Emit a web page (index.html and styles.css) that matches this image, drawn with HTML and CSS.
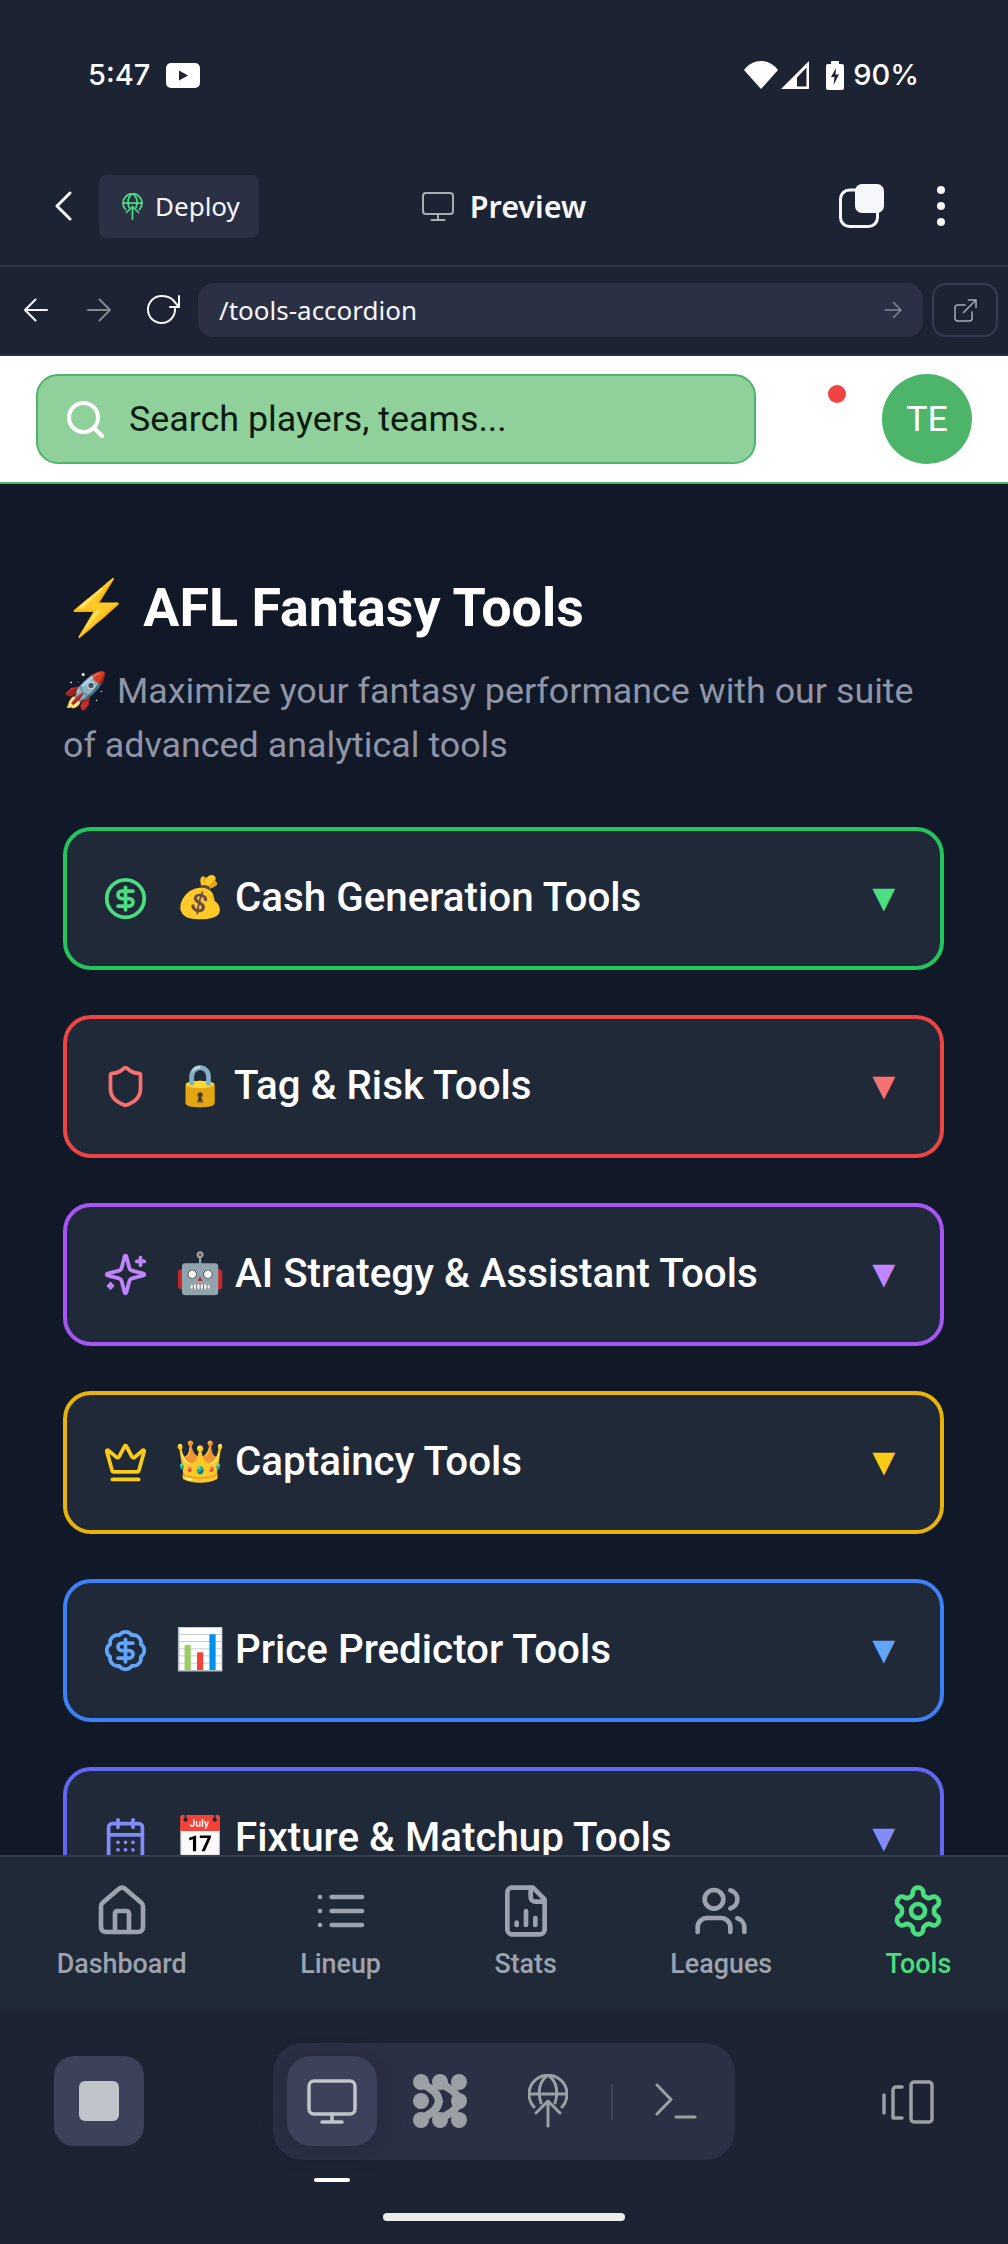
FILE: index.html
```html
<!DOCTYPE html>
<html lang="en">
<head>
<meta charset="utf-8">
<title>AFL Fantasy Tools</title>
<link rel="stylesheet" href="styles.css">
</head>
<body>
<div class="status">
  <div class="status-left">
    <span class="time">5:47</span>
    <svg class="yt" viewBox="0 0 34 25"><rect width="34" height="25" rx="5" fill="#fff"/><path d="M13 7.500l9 5-9 5z" fill="#1c2333"/></svg>
  </div>
  <div class="status-right">
    <svg class="wifi" viewBox="0 0 34 28"><path d="M0 9C9-3 25-3 34 9L17 28z" fill="#fff"/></svg>
    <svg class="signal" viewBox="0 0 28 28"><path d="M28 0V28H0zM25.500 6.500L16 16.500V25.500H25.500z" fill="#fff" fill-rule="evenodd"/></svg>
    <svg class="batt" viewBox="0 0 18 29"><path d="M5 0h8v3h3a2 2 0 0 1 2 2v22a2 2 0 0 1-2 2H2a2 2 0 0 1-2-2V5a2 2 0 0 1 2-2h3z" fill="#fff"/><path d="M10 7L5 16h3.500L7.500 24 13 13.500H9.500z" fill="#1c2333"/></svg>
    <span class="pct">90%</span>
  </div>
</div>

<header class="topbar">
  <div class="top-left">
    <svg class="chev" viewBox="0 0 18 30"><path d="M16 2L3 15l13 13" fill="none" stroke="#f5f7fa" stroke-width="3" stroke-linecap="round" stroke-linejoin="round"/></svg>
    <div class="deploy">
      <svg class="globe-s" viewBox="0 0 40 54" fill="none" stroke="#4ade80" stroke-width="3.500" stroke-linecap="round" stroke-linejoin="round"><path d="M6 33A19 19 0 1 1 34 33"/><path d="M1.500 20H38.500"/><path d="M20 1C10 8 10 20 13 29"/><path d="M20 1C30 8 30 20 27 29"/><path d="M20 52V27M8 39l12-12 12 12"/></svg>
      <span>Deploy</span>
    </div>
  </div>
  <div class="top-mid">
    <svg class="mon-s" viewBox="0 0 32 29" fill="none" stroke="#a8adb5" stroke-width="2" stroke-linecap="round" stroke-linejoin="round"><rect x="1" y="1" width="30" height="21" rx="3"/><path d="M16 22v6M9.500 28h13"/></svg>
    <span>Preview</span>
  </div>
  <div class="top-right">
    <svg class="tabs" viewBox="0 0 45 44"><rect x="1.500" y="6" width="37" height="36.500" rx="9" fill="none" stroke="#f5f7fa" stroke-width="3"/><rect x="16" y="0" width="29" height="29" rx="7" fill="#f5f7fa"/></svg>
    <svg class="dots" viewBox="0 0 8 40"><circle cx="4" cy="4" r="4" fill="#f5f7fa"/><circle cx="4" cy="20" r="4" fill="#f5f7fa"/><circle cx="4" cy="36" r="4" fill="#f5f7fa"/></svg>
  </div>
</header>

<div class="urlrow">
  <svg class="nav-arrow" viewBox="0 0 24 24" fill="none" stroke="#f5f7fa" stroke-width="2" stroke-linecap="round" stroke-linejoin="round"><path d="M23 12H1M11.500 1.500L1 12l10.500 10.500"/></svg>
  <svg class="nav-arrow dim" viewBox="0 0 24 24" fill="none" stroke="#85888f" stroke-width="2" stroke-linecap="round" stroke-linejoin="round"><path d="M1 12h22M12.500 1.500L23 12 12.500 22.500"/></svg>
  <svg class="reload" viewBox="0 0 33 30" fill="none" stroke="#f5f7fa" stroke-width="2" stroke-linecap="round" stroke-linejoin="round"><path d="M28 14a13.500 13.500 0 1 1-13.500-13c4 0 8.500 1 11.500 4L32 12"/><path d="M32 1v11H23"/></svg>
  <div class="url">
    <span>/tools-accordion</span>
    <svg class="url-go" viewBox="0 0 18 18" fill="none" stroke="#82868f" stroke-width="1.500" stroke-linecap="round" stroke-linejoin="round"><path d="M1 9h16M9.500 1.500L17 9l-7.500 7.500"/></svg>
  </div>
  <div class="ext">
    <svg class="ext-i" viewBox="0 0 23 23" fill="none" stroke="#a8adb5" stroke-width="1.500" stroke-linecap="round" stroke-linejoin="round"><path d="M18 13v6.500a2.500 2.500 0 0 1-2.500 2.500h-12A2.500 2.500 0 0 1 1 19.500v-11A2.500 2.500 0 0 1 3.500 6H11"/><path d="M14.500 1H22v7.500M22 1L9.500 13.500"/></svg>
  </div>
</div>

<div class="apphead">
  <div class="search">
    <svg class="search-i" viewBox="0 0 37 37" fill="none" stroke="#fff" stroke-width="4" stroke-linecap="round"><circle cx="16.500" cy="16.500" r="14.500"/><path d="M27.500 27.500l7.500 7.500"/></svg>
    <span>Search players, teams...</span>
  </div>
  <span class="reddot"></span>
  <div class="avatar">TE</div>
</div>

<main class="page">
  <h1 class="title"><span class="emo">⚡</span> AFL Fantasy Tools</h1>
  <p class="sub">🚀 Maximize your fantasy performance with our suite of advanced analytical tools</p>
  <div class="list">
    <section class="card green">
      <svg class="ic" viewBox="0 0 24 24"><circle cx="12" cy="12" r="10"/><path d="M16 8h-6a2 2 0 1 0 0 4h4a2 2 0 1 1 0 4H8"/><path d="M12 18V6"/></svg>
      <h2>💰 Cash Generation Tools</h2><span class="arrow">▼</span>
    </section>
    <section class="card red">
      <svg class="ic" viewBox="0 0 24 24"><path d="M20 13c0 5-3.500 7.500-7.660 8.950a1 1 0 0 1-.67-.01C7.500 20.500 4 18 4 13V6a1 1 0 0 1 1-1c2 0 4.500-1.200 6.240-2.720a1.170 1.170 0 0 1 1.520 0C14.510 3.810 17 5 19 5a1 1 0 0 1 1 1z"/></svg>
      <h2>🔒 Tag &amp; Risk Tools</h2><span class="arrow">▼</span>
    </section>
    <section class="card purple">
      <svg class="ic" viewBox="0 0 24 24"><path d="M9.937 15.500A2 2 0 0 0 8.500 14.063l-6.135-1.582a.5.5 0 0 1 0-.962L8.500 9.936A2 2 0 0 0 9.937 8.500l1.582-6.135a.5.5 0 0 1 .963 0L14.063 8.500A2 2 0 0 0 15.500 9.937l6.135 1.581a.5.5 0 0 1 0 .964L15.500 14.063a2 2 0 0 0-1.437 1.437l-1.582 6.135a.5.5 0 0 1-.963 0z"/><path d="M20 3v4M22 5h-4M4 17v2M5 18H3"/></svg>
      <h2>🤖 AI Strategy &amp; Assistant Tools</h2><span class="arrow">▼</span>
    </section>
    <section class="card yellow">
      <svg class="ic" viewBox="0 0 24 24"><path d="M11.562 3.266a.5.5 0 0 1 .876 0L15.390 8.870a1 1 0 0 0 1.516.294L21.183 5.500a.5.5 0 0 1 .798.519l-2.834 10.246a1 1 0 0 1-.956.734H5.810a1 1 0 0 1-.957-.734L2.020 6.020a.5.5 0 0 1 .798-.519l4.276 3.664a1 1 0 0 0 1.516-.294z"/><path d="M5 21h14"/></svg>
      <h2>👑 Captaincy Tools</h2><span class="arrow">▼</span>
    </section>
    <section class="card blue">
      <svg class="ic" viewBox="0 0 24 24"><path d="M3.850 8.620a4 4 0 0 1 4.780-4.770 4 4 0 0 1 6.740 0 4 4 0 0 1 4.780 4.780 4 4 0 0 1 0 6.740 4 4 0 0 1-4.770 4.780 4 4 0 0 1-6.750 0 4 4 0 0 1-4.780-4.770 4 4 0 0 1 0-6.760Z"/><path d="M16 8h-6a2 2 0 1 0 0 4h4a2 2 0 1 1 0 4H8"/><path d="M12 18V6"/></svg>
      <h2>📊 Price Predictor Tools</h2><span class="arrow">▼</span>
    </section>
    <section class="card indigo">
      <svg class="ic" viewBox="0 0 24 24"><path d="M8 2v4M16 2v4"/><rect x="3" y="4" width="18" height="18" rx="2"/><path d="M3 10h18M8 14h.01M12 14h.01M16 14h.01M8 18h.01M12 18h.01M16 18h.01"/></svg>
      <h2>📅 Fixture &amp; Matchup Tools</h2><span class="arrow">▼</span>
    </section>
  </div>
</main>

<nav class="tabbar">
  <a class="tab"><svg viewBox="0 0 24 24"><path d="M15 21v-8a1 1 0 0 0-1-1h-4a1 1 0 0 0-1 1v8"/><path d="M3 10a2 2 0 0 1 .709-1.528l7-5.999a2 2 0 0 1 2.582 0l7 5.999A2 2 0 0 1 21 10v9a2 2 0 0 1-2 2H5a2 2 0 0 1-2-2z"/></svg><span>Dashboard</span></a>
  <a class="tab"><svg viewBox="0 0 24 24"><path d="M3 12h.01M3 18h.01M3 6h.01M8 12h13M8 18h13M8 6h13"/></svg><span>Lineup</span></a>
  <a class="tab"><svg viewBox="0 0 24 24"><path d="M15 2H6a2 2 0 0 0-2 2v16a2 2 0 0 0 2 2h12a2 2 0 0 0 2-2V7Z"/><path d="M14 2v4a2 2 0 0 0 2 2h4M8 18v-1M12 18v-6M16 18v-3"/></svg><span>Stats</span></a>
  <a class="tab"><svg viewBox="0 0 24 24"><path d="M16 21v-2a4 4 0 0 0-4-4H6a4 4 0 0 0-4 4v2"/><circle cx="9" cy="7" r="4"/><path d="M22 21v-2a4 4 0 0 0-3-3.870M16 3.130a4 4 0 0 1 0 7.750"/></svg><span>Leagues</span></a>
  <a class="tab active"><svg viewBox="0 0 24 24"><path d="M12.220 2h-.44a2 2 0 0 0-2 2v.18a2 2 0 0 1-1 1.730l-.43.250a2 2 0 0 1-2 0l-.15-.08a2 2 0 0 0-2.730.730l-.22.380a2 2 0 0 0 .730 2.730l.15.100a2 2 0 0 1 1 1.720v.510a2 2 0 0 1-1 1.740l-.15.090a2 2 0 0 0-.730 2.730l.22.380a2 2 0 0 0 2.730.730l.15-.08a2 2 0 0 1 2 0l.43.250a2 2 0 0 1 1 1.730V20a2 2 0 0 0 2 2h.44a2 2 0 0 0 2-2v-.18a2 2 0 0 1 1-1.730l.43-.250a2 2 0 0 1 2 0l.15.08a2 2 0 0 0 2.730-.730l.22-.390a2 2 0 0 0-.730-2.730l-.15-.08a2 2 0 0 1-1-1.740v-.5a2 2 0 0 1 1-1.740l.15-.090a2 2 0 0 0 .730-2.730l-.22-.380a2 2 0 0 0-2.730-.730l-.15.08a2 2 0 0 1-2 0l-.43-.250a2 2 0 0 1-1-1.730V4a2 2 0 0 0-2-2z"/><circle cx="12" cy="12" r="3"/></svg><span>Tools</span></a>
</nav>

<footer class="dock">
  <div class="dock-row">
    <div class="stop"><span></span></div>
    <div class="group">
      <div class="seg selected">
        <svg class="dk-mon" viewBox="0 0 50 45" fill="none" stroke="#bfc5ca" stroke-width="3.500" stroke-linecap="round" stroke-linejoin="round"><rect x="2" y="2" width="46" height="33" rx="5"/><path d="M25 35v8M15 43h20"/></svg>
      </div>
      <div class="seg">
        <svg class="dk-cluster" viewBox="0 0 54 54" fill="#9ba0a5"><circle cx="8" cy="8" r="8"/><circle cx="27" cy="8" r="8"/><circle cx="46" cy="8" r="8"/><circle cx="8" cy="27" r="8"/><circle cx="46" cy="27" r="8"/><circle cx="8" cy="46" r="8"/><circle cx="27" cy="46" r="8"/><circle cx="46" cy="46" r="8"/><path d="M8 8C14 14 24 15 26 27 24 39 14 40 8 46M27 8C33 14 43 15 46 27 43 39 33 40 27 46" fill="none" stroke="#9ba0a5" stroke-width="8" stroke-linecap="round" stroke-linejoin="round"/></svg>
      </div>
      <div class="seg">
        <svg class="dk-globe" viewBox="0 0 40 54" fill="none" stroke="#9ba0a5" stroke-width="3" stroke-linecap="round" stroke-linejoin="round"><path d="M6 33A19 19 0 1 1 34 33"/><path d="M1.500 20H38.500"/><path d="M20 1C10 8 10 20 13 29"/><path d="M20 1C30 8 30 20 27 29"/><path d="M20 52V27M8 39l12-12 12 12"/></svg>
      </div>
      <span class="sep"></span>
      <div class="seg">
        <svg class="dk-term" viewBox="0 0 42 36" fill="none" stroke="#9ba0a5" stroke-width="3" stroke-linecap="round" stroke-linejoin="round"><path d="M2 2l14 14.500L2 31M21 34h19"/></svg>
      </div>
    </div>
    <svg class="dk-side" viewBox="0 0 52 44" fill="none" stroke="#9ba0a5" stroke-width="3.500" stroke-linecap="round" stroke-linejoin="round"><path d="M2 15v18M20 7h-6a3 3 0 0 0-3 3v28h9"/><rect x="29" y="2" width="21" height="40" rx="3"/></svg>
  </div>
  <span class="mark"></span>
  <span class="homebar"></span>
</footer>
</body>
</html>
```
FILE: styles.css
```css
* { box-sizing: border-box; }
html, body { margin: 0; padding: 0; }
body {
  width: 1008px;
  height: 2244px;
  overflow: hidden;
  display: flex;
  flex-direction: column;
  background: #1c2333;
  font-family: Roboto, sans-serif;
}
svg { display: block; flex: none; }

.status {
  flex: none;
  height: 112px;
  padding: 54px 89px 0 88px;
  display: flex;
  justify-content: space-between;
  align-items: flex-start;
  color: #fff;
  font-family: Inter, sans-serif;
  font-weight: 500;
  font-size: 29px;
  line-height: 42px;
}
.status-left, .status-right { display: flex; align-items: center; }
.status-left { gap: 16px; }
.yt { width: 34px; height: 25px; }
.wifi { width: 34px; height: 28px; }
.signal { width: 28px; height: 28px; margin-left: 3px; }
.batt { width: 18px; height: 29px; margin-left: 17px; }
.pct { margin-left: 9px; }

.topbar {
  flex: none;
  height: 155px;
  padding: 35px 0 0 0;
  border-bottom: 2px solid #2b3045;
  display: grid;
  grid-template-columns: 1fr auto 1fr;
  align-items: center;
  color: #f5f7fa;
}
.top-left { display: flex; align-items: center; padding-left: 54px; gap: 27px; }
.chev { width: 18px; height: 30px; }
.deploy {
  width: 160px;
  height: 63px;
  border-radius: 8px;
  background: #2b3045;
  display: flex;
  align-items: center;
  padding-left: 23px;
  gap: 12px;
  font-family: "Noto Sans", sans-serif;
  font-size: 26px;
}
.globe-s { width: 21px; height: 27px; }
.top-mid {
  display: flex;
  align-items: center;
  gap: 16px;
  font-family: "Noto Sans", sans-serif;
  font-weight: 600;
  font-size: 30.500px;
}
.mon-s { width: 32px; height: 29px; }
.top-right { display: flex; justify-content: flex-end; align-items: center; padding-right: 63px; gap: 53px; }
.tabs { width: 45px; height: 44px; }
.dots { width: 8px; height: 40px; }

.urlrow {
  flex: none;
  height: 89px;
  display: flex;
  align-items: center;
  padding: 0 10px 1px 24px;
  border-bottom: 2px solid #2b3045;
}
.nav-arrow { width: 24px; height: 24px; }
.dim { margin-left: 39px; }
.reload { width: 33px; height: 30px; margin-left: 36px; }
.url {
  width: 725px;
  height: 54px;
  margin-left: 18px;
  border-radius: 16px;
  background: #2b3045;
  display: flex;
  align-items: center;
  justify-content: space-between;
  padding: 0 21px;
  color: #f5f7fa;
  font-family: "Noto Sans", sans-serif;
  font-size: 26px;
}
.url-go { width: 18px; height: 18px; }
.ext {
  width: 66px;
  height: 54px;
  margin-left: 9px;
  border: 2px solid #343b52;
  border-radius: 14px;
  display: flex;
  align-items: center;
  justify-content: center;
}
.ext-i { width: 23px; height: 23px; }

.apphead {
  flex: none;
  height: 128px;
  background: #fff;
  border-bottom: 2px solid #4db56a;
  display: flex;
  align-items: flex-start;
  padding: 18px 36px 0;
  position: relative;
}
.search {
  width: 720px;
  height: 90px;
  border: 2px solid #4db56a;
  border-radius: 22px;
  background: #90d19b;
  display: flex;
  align-items: center;
  padding-left: 29px;
  gap: 25px;
  color: #0a1a10;
  font-size: 35.840px;
}
.search-i { width: 37px; height: 37px; }
.reddot {
  position: absolute;
  left: 828px;
  top: 29px;
  width: 18px;
  height: 18px;
  border-radius: 50%;
  background: #ef4444;
}
.avatar {
  width: 90px;
  height: 90px;
  margin-left: auto;
  border-radius: 50%;
  background: #4db56a;
  color: #fff;
  font-size: 35.840px;
  display: flex;
  align-items: center;
  justify-content: center;
}

.page {
  flex: 1;
  min-height: 0;
  overflow: hidden;
  padding: 94px 64px 0 63px;
  background: #111827;
}
.title {
  margin: 0;
  color: #fff;
  font-size: 53.760px;
  font-weight: 700;
  line-height: 60px;
}
.sub {
  margin: 27px 0 0;
  color: #8f95a6;
  font-size: 35.840px;
  line-height: 53.760px;
}
.list { margin-top: 54px; display: flex; flex-direction: column; gap: 45px; }
.card {
  flex: none;
  height: 143px;
  border: 4px solid;
  border-radius: 28px;
  background: #1f2937;
  display: flex;
  align-items: center;
  padding: 0 37px 0 36px;
  gap: 27px;
}
.card h2 {
  margin: 0;
  flex: 1;
  color: #fff;
  font-size: 40.320px;
  font-weight: 500;
  line-height: 50px;
  white-space: nowrap;
}
.ic { width: 45px; height: 45px; fill: none; stroke: currentColor; stroke-width: 2; stroke-linecap: round; stroke-linejoin: round; }
.arrow { font-size: 39px; line-height: 1; }
.green { border-color: #22c55e; color: #4ade80; }
.red { border-color: #ef4444; color: #f87171; }
.purple { border-color: #a855f7; color: #c084fc; }
.yellow { border-color: #eab308; color: #facc15; }
.blue { border-color: #3b82f6; color: #60a5fa; }
.indigo { border-color: #6366f1; color: #818cf8; }

.tabbar {
  flex: none;
  height: 155px;
  border-top: 2px solid #374151;
  background: #1f2937;
  display: flex;
  justify-content: space-around;
  align-items: flex-start;
  padding-top: 26px;
}
.tab {
  display: flex;
  flex-direction: column;
  align-items: center;
  gap: 8px;
  color: #9ca3af;
  font-size: 26.880px;
  font-weight: 500;
  line-height: 34px;
}
.tab svg { width: 56px; height: 56px; fill: none; stroke: currentColor; stroke-width: 2; stroke-linecap: round; stroke-linejoin: round; }
.tab.active { color: #4ade80; }

.dock { flex: none; height: 234px; position: relative; }
.dock-row {
  height: 150px;
  padding: 33px 74px 0 54px;
  display: flex;
  align-items: flex-start;
}
.stop {
  width: 90px;
  height: 90px;
  margin-top: 13px;
  margin-right: 129px;
  border-radius: 20px;
  background: #3b4259;
  display: flex;
  align-items: center;
  justify-content: center;
}
.stop span { width: 40px; height: 40px; border-radius: 6px; background: #bfc5ca; }
.group {
  width: 462px;
  height: 117px;
  border-radius: 30px;
  background: #2b3045;
  display: flex;
  align-items: center;
  padding: 0 14px;
}
.seg { width: 90px; height: 90px; flex: none; display: flex; align-items: center; justify-content: center; margin-top: -1px; }
.seg + .seg { margin-left: 18px; }
.selected { border-radius: 24px; background: #3b4259; box-shadow: 0 4px 24px rgba(20, 24, 38, .25); }
.dk-mon { width: 50px; height: 45px; }
.dk-cluster { width: 54px; height: 54px; }
.dk-globe { width: 40px; height: 54px; }
.sep { width: 2px; height: 36px; margin-left: 18px; background: #3b4259; }
.dk-term { width: 42px; height: 36px; }
.seg:last-child { margin-left: 18px; }
.dk-side { width: 52px; height: 44px; margin-top: 37px; margin-left: auto; }
.mark { position: absolute; left: 314px; top: 168px; width: 36px; height: 4px; border-radius: 2px; background: #fff; }
.homebar { position: absolute; left: 383px; top: 203px; width: 242px; height: 8px; border-radius: 4px; background: #ededed; }
```
